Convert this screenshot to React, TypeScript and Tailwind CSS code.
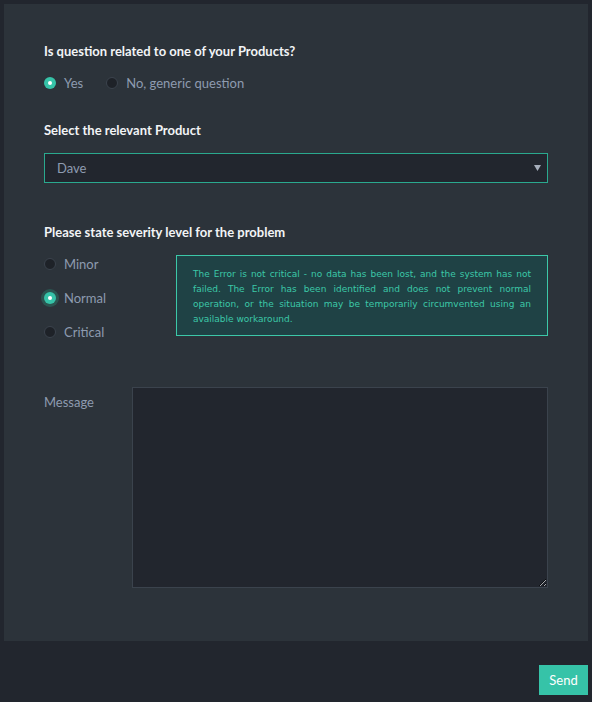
import { useState } from "react";

const severities = [
  { id: "minor", label: "Minor" },
  { id: "normal", label: "Normal" },
  { id: "critical", label: "Critical" },
];

function Radio({ checked, focused, label, onClick }: { checked: boolean; focused?: boolean; label: string; onClick: () => void }) {
  return (
    <button type="button" onClick={onClick} className="flex h-[16px] items-center gap-2 text-[13px] leading-[16px] text-[#8e9bb0]">
      <span
        className={
          "flex h-[12px] w-[12px] items-center justify-center rounded-full " +
          (checked ? "bg-[#36c3a8]" : "border border-[#3b434d] bg-[#1e2228]") +
          (focused ? " ring-[3px] ring-[#2b5550]" : "")
        }
      >
        {checked ? <span className="h-[4px] w-[4px] rounded-full bg-white" /> : null}
      </span>
      <span>{label}</span>
    </button>
  );
}

export default function App() {
  const [related, setRelated] = useState("yes");
  const [severity, setSeverity] = useState("normal");

  return (
    <div className="min-h-[702px] bg-[#22262e] p-[4px] font-['Lato',sans-serif]">
      <div className="bg-[#2c333a] px-[40px] pb-[53px] pt-[39px]">
        <p className="text-[13px] font-bold leading-[16px] text-[#f2f4f6]">Is question related to one of your Products?</p>
        <div className="mt-[16px] flex gap-[23px]">
          <Radio checked={related === "yes"} label="Yes" onClick={() => setRelated("yes")} />
          <Radio checked={related === "no"} label="No, generic question" onClick={() => setRelated("no")} />
        </div>

        <p className="mt-[31px] text-[13px] font-bold leading-[16px] text-[#f2f4f6]">Select the relevant Product</p>
        <div className="relative mt-[15px] h-[30px] border border-[#2aa98e] bg-[#22262e]">
          <span className="absolute left-[12px] top-[6px] text-[13px] leading-[16px] text-[#8e9bb0]">Dave</span>
          <svg className="absolute right-[6px] top-[11px]" width="7" height="6" viewBox="0 0 7 6">
            <path d="M0 0h7L3.5 6z" fill="#a6aebb" />
          </svg>
        </div>

        <p className="mt-[41px] text-[13px] font-bold leading-[16px] text-[#f2f4f6]">Please state severity level for the problem</p>
        <div className="mt-[15px] flex items-start">
          <div className="flex w-[132px] flex-col gap-[18px] pt-[1px]">
            {severities.map((s) => (
              <Radio
                key={s.id}
                checked={severity === s.id}
                focused={severity === s.id}
                label={s.label}
                onClick={() => setSeverity(s.id)}
              />
            ))}
          </div>
          <div className="h-[81px] flex-1 border border-[#3cc8a8] bg-[#1f4245] px-[16px] pt-[11px] text-justify font-['DejaVu_Sans',sans-serif] text-[9px] leading-[15px] text-[#3cc8a8]">
            The Error is not critical - no data has been lost, and the system has not failed. The Error has been identified and does not prevent normal operation, or the situation may be temporarily circumvented using an available workaround.
          </div>
        </div>

        <div className="mt-[47px] flex">
          <label className="w-[88px] pt-[7px] text-[13px] leading-[16px] text-[#8e9bb0]">Message</label>
          <textarea className="block h-[201px] flex-1 border border-[#3b434d] bg-[#22262e] p-2 text-[13px] text-[#c0c8d4] outline-none" />
        </div>
      </div>
      <div className="mt-[24px] flex justify-end">
        <button type="button" className="h-[30px] w-[49px] bg-[#36c3a8] text-[13px] leading-[16px] text-white">
          Send
        </button>
      </div>
    </div>
  );
}
